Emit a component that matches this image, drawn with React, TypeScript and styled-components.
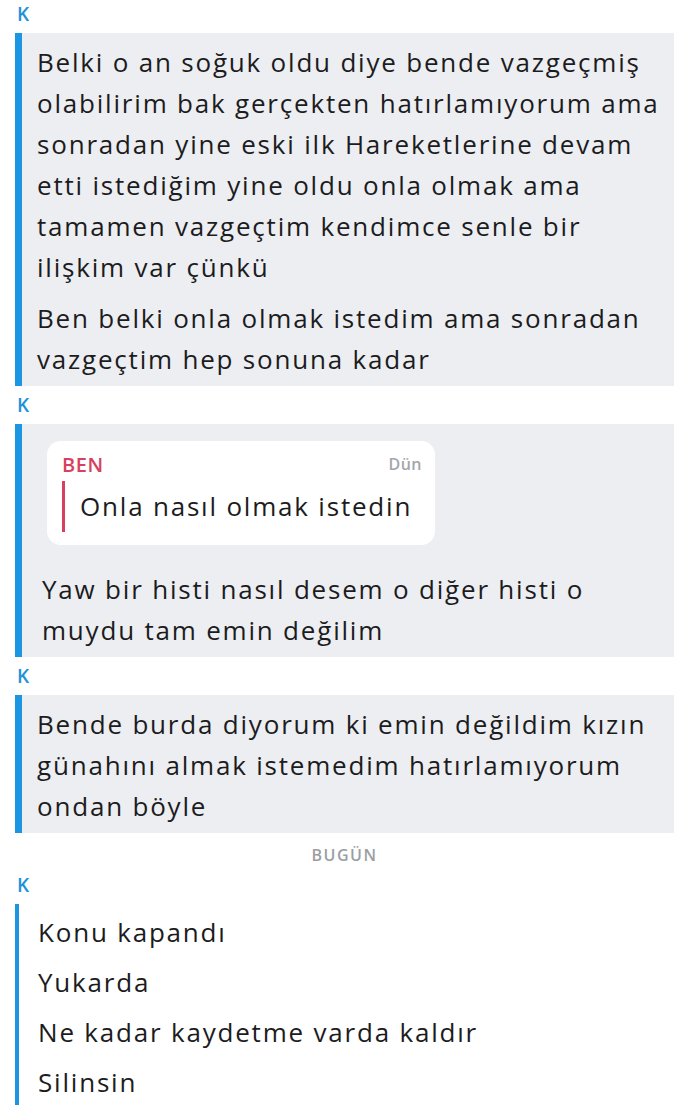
import { createGlobalStyle, styled } from 'styled-components';

const GlobalStyle = createGlobalStyle`
  html, body {
    margin: 0;
    padding: 0;
    background: #ffffff;
  }
  body {
    font-family: "Open Sans", "Noto Sans", "Liberation Sans", sans-serif;
    color: #1c1c1e;
  }
`;

const Chat = styled.main`
  display: flex;
  flex-direction: column;
  width: 690px;
  padding-left: 15px;
  padding-right: 16px;
  box-sizing: border-box;
`;

const Sender = styled.div`
  font-size: 19px;
  font-weight: 600;
  color: #2092d8;
  height: 38px;
  line-height: 38px;
  padding-left: 2px;

  &:first-child {
    margin-top: -5px;
  }
`;

const Group = styled.section<{ $saved?: boolean }>`
  display: flex;
  flex-direction: column;
  background: ${(p) => (p.$saved ? '#eceef1' : 'transparent')};
  border-left: ${(p) => (p.$saved ? '7px' : '4px')} solid #1a96e2;
  padding: ${(p) => (p.$saved ? '4px 0 1px' : '3px 0 30px')};
`;

const Message = styled.p<{ $indent?: number; $tight?: boolean }>`
  margin: 0;
  padding: ${(p) => (p.$tight ? '4.5px' : '5px')} 4px ${(p) => (p.$tight ? '4.5px' : '5px')}
    ${(p) => p.$indent ?? 15}px;
  font-size: 26px;
  line-height: 41px;
  color: #1c1c1e;
  letter-spacing: 1.8px;
  white-space: nowrap;
`;

const QuoteCard = styled.div`
  margin: 13px 0 19px 25px;
  width: 388px;
  background: #ffffff;
  border-radius: 14px;
  padding: 12px 13px 13px 15px;
  box-sizing: border-box;
`;

const QuoteHead = styled.div`
  display: flex;
  justify-content: space-between;
  align-items: center;
  height: 22px;
  margin-bottom: 6px;
`;

const QuoteName = styled.span`
  font-size: 20px;
  font-weight: 600;
  letter-spacing: 0.6px;
  color: #d8415e;
`;

const QuoteTime = styled.span`
  font-size: 16px;
  font-weight: 600;
  letter-spacing: 0.5px;
  color: #a3a6aa;
`;

const QuoteBody = styled.div`
  border-left: 3px solid #d8415e;
  padding-left: 15px;
  font-size: 26px;
  line-height: 51px;
  letter-spacing: 1.8px;
  color: #1c1c1e;
`;

const DayDivider = styled.div`
  text-align: center;
  font-size: 16px;
  font-weight: 600;
  color: #9b9ea3;
  letter-spacing: 1.5px;
  height: 33px;
  padding-top: 12px;
  line-height: 20px;
  box-sizing: border-box;
`;

export default function App() {
  return (
    <>
      <GlobalStyle />
      <Chat>
        <Sender>K</Sender>
        <Group $saved>
          <Message>
            Belki o an soğuk oldu diye bende vazgeçmiş
            <br />
            olabilirim bak gerçekten hatırlamıyorum ama
            <br />
            sonradan yine eski ilk Hareketlerine devam
            <br />
            etti istediğim yine oldu onla olmak ama
            <br />
            tamamen vazgeçtim kendimce senle bir
            <br />
            ilişkim var çünkü
          </Message>
          <Message>
            Ben belki onla olmak istedim ama sonradan
            <br />
            vazgeçtim hep sonuna kadar
          </Message>
        </Group>
        <Sender>K</Sender>
        <Group $saved>
          <QuoteCard>
            <QuoteHead>
              <QuoteName>BEN</QuoteName>
              <QuoteTime>Dün</QuoteTime>
            </QuoteHead>
            <QuoteBody>Onla nasıl olmak istedin</QuoteBody>
          </QuoteCard>
          <Message $indent={20}>
            Yaw bir histi nasıl desem o diğer histi o
            <br />
            muydu tam emin değilim
          </Message>
        </Group>
        <Sender>K</Sender>
        <Group $saved>
          <Message>
            Bende burda diyorum ki emin değildim kızın
            <br />
            günahını almak istemedim hatırlamıyorum
            <br />
            ondan böyle
          </Message>
        </Group>
        <DayDivider>BUGÜN</DayDivider>
        <Sender>K</Sender>
        <Group>
          <Message $indent={19} $tight>Konu kapandı</Message>
          <Message $indent={19} $tight>Yukarda</Message>
          <Message $indent={19} $tight>Ne kadar kaydetme varda kaldır</Message>
          <Message $indent={19} $tight>Silinsin</Message>
        </Group>
      </Chat>
    </>
  );
}
